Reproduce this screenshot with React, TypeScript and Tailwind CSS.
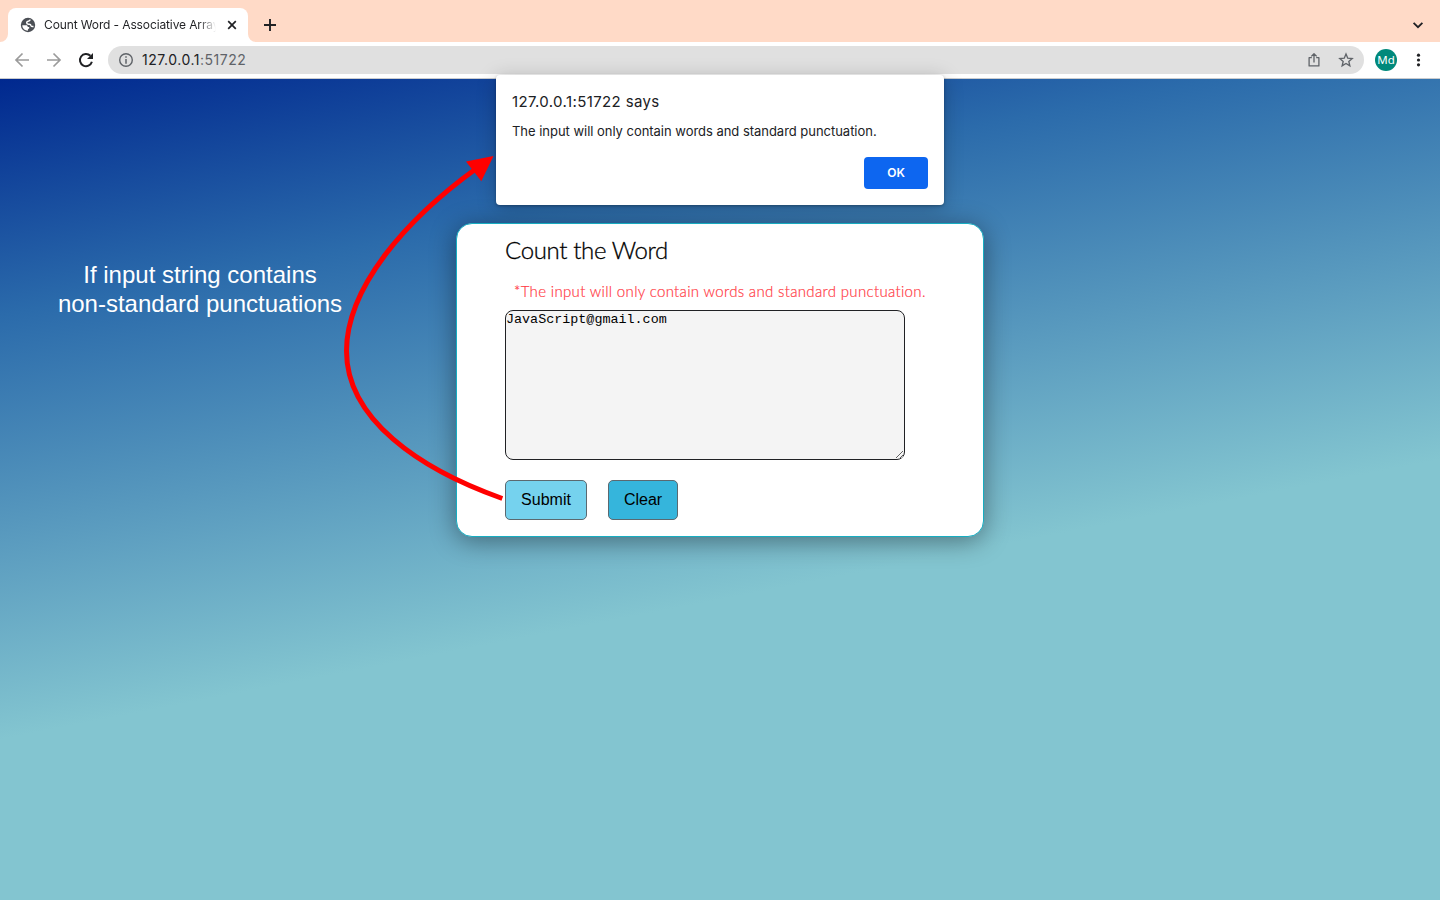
import React from "react";

function TabStrip() {
  return (
    <div className="flex h-[42px] items-end bg-[#ffdac7]">
      <svg className="h-2 w-2 shrink-0" viewBox="0 0 8 8"><path d="M8 0v8H0a8 8 0 0 0 8-8Z" fill="#fff" /></svg>
      <div className="flex h-[34px] w-[240px] items-center rounded-t-lg bg-white pl-3 pr-[8px]">
        <svg className="h-4 w-4 shrink-0" viewBox="0 0 16 16">
          <circle cx="8" cy="8" r="7.2" fill="#4b4f55" />
          <path d="M2.300 8.300h3.900c1 0 1.500.6 1.500 1.500v.3h1.500v1.500c-.9.200-1.300.7-1.300 1.400v.8C4.900 13.700 2.200 11.400 2.300 8.300Z" fill="#fff" />
          <path d="M10.200 2.600c-.3 1.200-1.100 1.600-2.100 1.700-.9.100-1.400.6-1.400 1.500 0 1 .7 1.400 1.600 1.400h1c1.100 0 1.500.6 1.700 1.500.3.700 1.100.9 2.500.7" fill="none" stroke="#fff" strokeWidth="1.500" />
        </svg>
        <div className="ml-2 w-[176px] overflow-hidden whitespace-nowrap bg-linear-to-r from-[#202124] from-90% to-transparent bg-clip-text font-[Inter,sans-serif] text-[12px] leading-4 tracking-[-0.120px] text-transparent">
          Count Word - Associative Array
        </div>
        <svg className="ml-2 h-4 w-4 shrink-0" viewBox="0 0 16 16"><path d="m4.200 4.200 7.600 7.600m0-7.600-7.600 7.600" stroke="#202124" strokeWidth="1.7" /></svg>
      </div>
      <svg className="h-2 w-2 shrink-0" viewBox="0 0 8 8"><path d="M0 0v8h8a8 8 0 0 1-8-8Z" fill="#fff" /></svg>
      <svg className="mb-[9px] ml-[6px] h-4 w-4" viewBox="0 0 16 16"><path d="M8 2v12M2 8h12" stroke="#202124" strokeWidth="1.900" /></svg>
      <svg className="mb-[9px] ml-auto mr-[14px] h-4 w-4" viewBox="0 0 16 16"><path d="m3.600 5.800 4.400 4.400 4.400-4.400" fill="none" stroke="#202124" strokeWidth="1.800" /></svg>
    </div>
  );
}

function Toolbar() {
  return (
    <div className="flex h-[37px] items-center border-b border-[#c9cbce] bg-white pl-[14px] pr-[14px]">
      <svg className="h-4 w-4" viewBox="0 0 16 16"><path d="M15 8H2m6.500-6.500L2 8l6.500 6.500" fill="none" stroke="#9b9b9b" strokeWidth="1.700" /></svg>
      <svg className="ml-4 h-4 w-4" viewBox="0 0 16 16"><path d="M1 8h13M7.500 1.500 14 8l-6.500 6.500" fill="none" stroke="#9b9b9b" strokeWidth="1.700" /></svg>
      <svg className="ml-4 h-4 w-4" viewBox="0 0 16 16">
        <path d="M13.900 9.800A6.100 6.100 0 1 1 12.400 3.800" fill="none" stroke="#202124" strokeWidth="2" />
        <path d="M15 1v6H9Z" fill="#202124" />
      </svg>
      <div className="ml-[14px] flex h-7 w-[1256px] items-center rounded-full bg-[#e0e0e0] pl-[10px] pr-[10px]">
        <svg className="h-4 w-4" viewBox="0 0 16 16">
          <circle cx="8" cy="8" r="6.300" fill="none" stroke="#5f6368" strokeWidth="1.400" />
          <path d="M8 4.200v1.600M8 7v4.800" stroke="#5f6368" strokeWidth="1.500" />
        </svg>
        <span className="ml-2 font-[Inter,sans-serif] text-[14px] leading-5 tracking-[0.530px] text-[#202124]">127.0.0.1<span className="text-[#5f6368]">:51722</span></span>
        <svg className="ml-auto h-4 w-4" viewBox="0 0 16 16"><path d="M5.800 5.700H3.100v8.200h9.800V5.700h-2.700M8 10.500V1.800M5.300 4.400 8 1.700l2.700 2.700" fill="none" stroke="#5f6368" strokeWidth="1.300" strokeLinejoin="round" /></svg>
        <svg className="ml-4 h-4 w-4" viewBox="0 0 16 16"><path d="m8 2 1.750 4.150 4.450.38-3.380 2.940 1.020 4.380L8 11.520l-3.840 2.330 1.020-4.380L1.800 6.530l4.450-.38Z" fill="none" stroke="#5f6368" strokeWidth="1.350" /></svg>
      </div>
      <div className="ml-[11px] flex h-[22px] w-[22px] items-center justify-center rounded-full bg-[#00897b] font-['Noto_Sans',sans-serif] text-[11.500px] leading-none text-white">Md</div>
      <svg className="ml-auto h-4 w-4" viewBox="0 0 16 16" fill="#202124"><circle cx="8.500" cy="3.200" r="1.600" /><circle cx="8.500" cy="8" r="1.600" /><circle cx="8.500" cy="12.800" r="1.600" /></svg>
    </div>
  );
}

function AlertDialog() {
  return (
    <div className="absolute left-[496px] top-[75px] flex h-[130px] w-[448px] flex-col rounded-[4px] bg-white px-4 pt-4 font-[Inter,sans-serif] text-[#202124] shadow-[0_1px_3px_rgba(0,0,0,0.3),0_3px_20px_rgba(0,0,0,0.22)]">
      <h2 className="whitespace-nowrap text-[15px] leading-[22px] tracking-[0.380px]">127.0.0.1:51722 says</h2>
      <p className="mt-[8px] whitespace-nowrap text-[13px] leading-5 tracking-[-0.030px]">The input will only contain words and standard punctuation.</p>
      <button className="mt-[16px] h-8 w-16 self-end rounded-[4px] bg-[#0d66f0] text-[12px] font-semibold text-white">OK</button>
    </div>
  );
}

function WordCard() {
  return (
    <section className="ml-[456px] mt-[144px] flex h-[314px] w-[528px] flex-col rounded-2xl border border-[#17adc1] bg-white pl-12 shadow-[0_4px_26px_rgba(0,0,0,0.4)]">
      <h1 className="mt-[10px] h-8 whitespace-nowrap font-[Lato,sans-serif] text-[24px] font-light leading-8 tracking-[-0.360px] text-black [-webkit-text-stroke:0.3px_black]">Count the Word</h1>
      <p className="ml-[9px] mt-[15px] h-5 whitespace-nowrap font-[Lato,sans-serif] text-[15px] font-light leading-5 tracking-[0.330px] text-[#ff3b45] [-webkit-text-stroke:0.2px_#ff3b45]">*The input will only contain words and standard punctuation.</p>
      <textarea
        readOnly
        className="mt-[9px] h-[150px] w-[400px] shrink-0 resize rounded-lg border border-[#202124] bg-[#f4f4f4] px-0 pt-[1px] font-['Liberation_Mono',monospace] text-[13.400px] leading-4 text-black outline-none"
        value="JavaScript@gmail.com"
      />
      <div className="mt-5 flex gap-[21px] font-['Liberation_Sans',sans-serif] text-[16px] text-black">
        <button className="h-10 w-[82px] rounded-[5px] border border-[#5b6970] bg-[#75d2ee]">Submit</button>
        <button className="h-10 w-[70px] rounded-[5px] border border-[#5b6970] bg-[#35b5dc]">Clear</button>
      </div>
    </section>
  );
}

export default function App() {
  return (
    <div className="relative flex h-[900px] w-[1440px] flex-col overflow-hidden">
      <TabStrip />
      <Toolbar />
      <main className="flex-1 bg-[linear-gradient(169deg,#00288f_0%,#2b6bab_21.5%,#83c5d0_60%)]">
        <WordCard />
      </main>
      <AlertDialog />
      <p className="absolute left-[40px] top-[260px] w-[320px] text-center font-['Liberation_Sans',sans-serif] text-[24px] leading-[29px] text-white">
        If input string contains<br />non-standard punctuations
      </p>
      <svg className="pointer-events-none absolute left-0 top-0 h-[900px] w-[1440px]" viewBox="0 0 1440 900">
        <path d="M502.300 498.500C419 469 346.500 419 346.500 351C346.500 288 405 220 477 168" fill="none" stroke="#f00" strokeWidth="5" />
        <path d="M493.500 156 466 161.500 481.300 181.300Z" fill="#f00" />
      </svg>
    </div>
  );
}
